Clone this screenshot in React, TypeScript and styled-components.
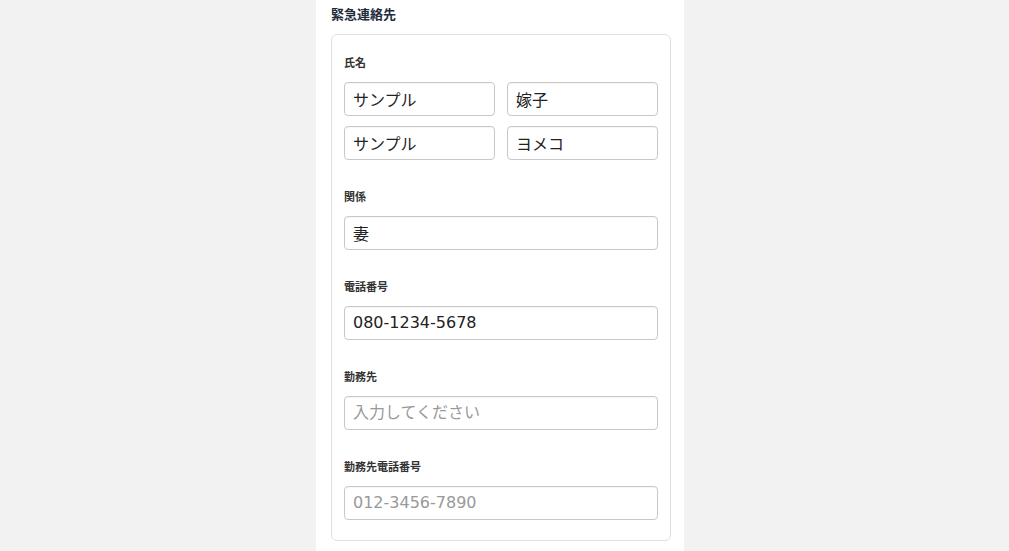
import { FC } from "react";
import styled, { createGlobalStyle } from "styled-components";

const GlobalStyle = createGlobalStyle`
  html, body {
    margin: 0;
    padding: 0;
    background: #f2f2f2;
    font-family: "Noto Sans CJK JP", "Noto Sans", sans-serif;
  }
`;

interface Field {
  label: string;
  values: { value?: string; placeholder?: string }[][];
}

const fields: Field[] = [
  {
    label: "氏名",
    values: [
      [{ value: "サンプル" }, { value: "嫁子" }],
      [{ value: "サンプル" }, { value: "ヨメコ" }],
    ],
  },
  { label: "関係", values: [[{ value: "妻" }]] },
  { label: "電話番号", values: [[{ value: "080-1234-5678" }]] },
  { label: "勤務先", values: [[{ placeholder: "入力してください" }]] },
  { label: "勤務先電話番号", values: [[{ placeholder: "012-3456-7890" }]] },
];

const App: FC = () => {
  return (
    <>
      <GlobalStyle />
      <Page>
        <Column>
          <Title>緊急連絡先</Title>
          <Card>
            {fields.map((field) => (
              <Group key={field.label}>
                <Label>{field.label}</Label>
                <Rows>
                  {field.values.map((row, i) => (
                    <Row key={i} $cols={row.length}>
                      {row.map((cell, j) => (
                        <Input
                          key={j}
                          defaultValue={cell.value}
                          placeholder={cell.placeholder}
                        />
                      ))}
                    </Row>
                  ))}
                </Rows>
              </Group>
            ))}
          </Card>
        </Column>
      </Page>
    </>
  );
};

export default App;

const Page = styled.div`
  min-height: 551px;
  display: flex;
  padding-left: 316px;
`;

const Column = styled.div`
  width: 368px;
  box-sizing: border-box;
  background: #fff;
  padding: 5px 13px 40px 15px;
`;

const Title = styled.h2`
  margin: 0;
  font-size: 13px;
  line-height: 18px;
  font-weight: 700;
  color: #1d2b3a;
`;

const Card = styled.div`
  margin-top: 11px;
  border: 1px solid #e0e0e0;
  border-radius: 6px;
  padding: 19px 12px 20px 12px;
  display: flex;
  flex-direction: column;
  gap: 28px;
`;

const Group = styled.div`
  display: flex;
  flex-direction: column;
`;

const Label = styled.label`
  font-size: 11px;
  line-height: 16px;
  font-weight: 700;
  color: #333;
  margin-bottom: 12px;
`;

const Rows = styled.div`
  display: flex;
  flex-direction: column;
  gap: 9.5px;
`;

const Row = styled.div<{ $cols: number }>`
  display: grid;
  grid-template-columns: repeat(${(p) => p.$cols}, 1fr);
  column-gap: 12px;
`;

const Input = styled.input`
  box-sizing: border-box;
  width: 100%;
  height: 34px;
  border: 1px solid #c8c8c8;
  border-radius: 4px;
  padding: 0 8px;
  font-family: "DejaVu Sans", "Noto Sans CJK JP", sans-serif;
  font-size: 16px;
  color: #222;
  background: #fff;
  box-shadow: inset 0 1px 1px rgba(0, 0, 0, 0.04);
  outline: none;

  &::placeholder {
    color: #999;
  }
`;
